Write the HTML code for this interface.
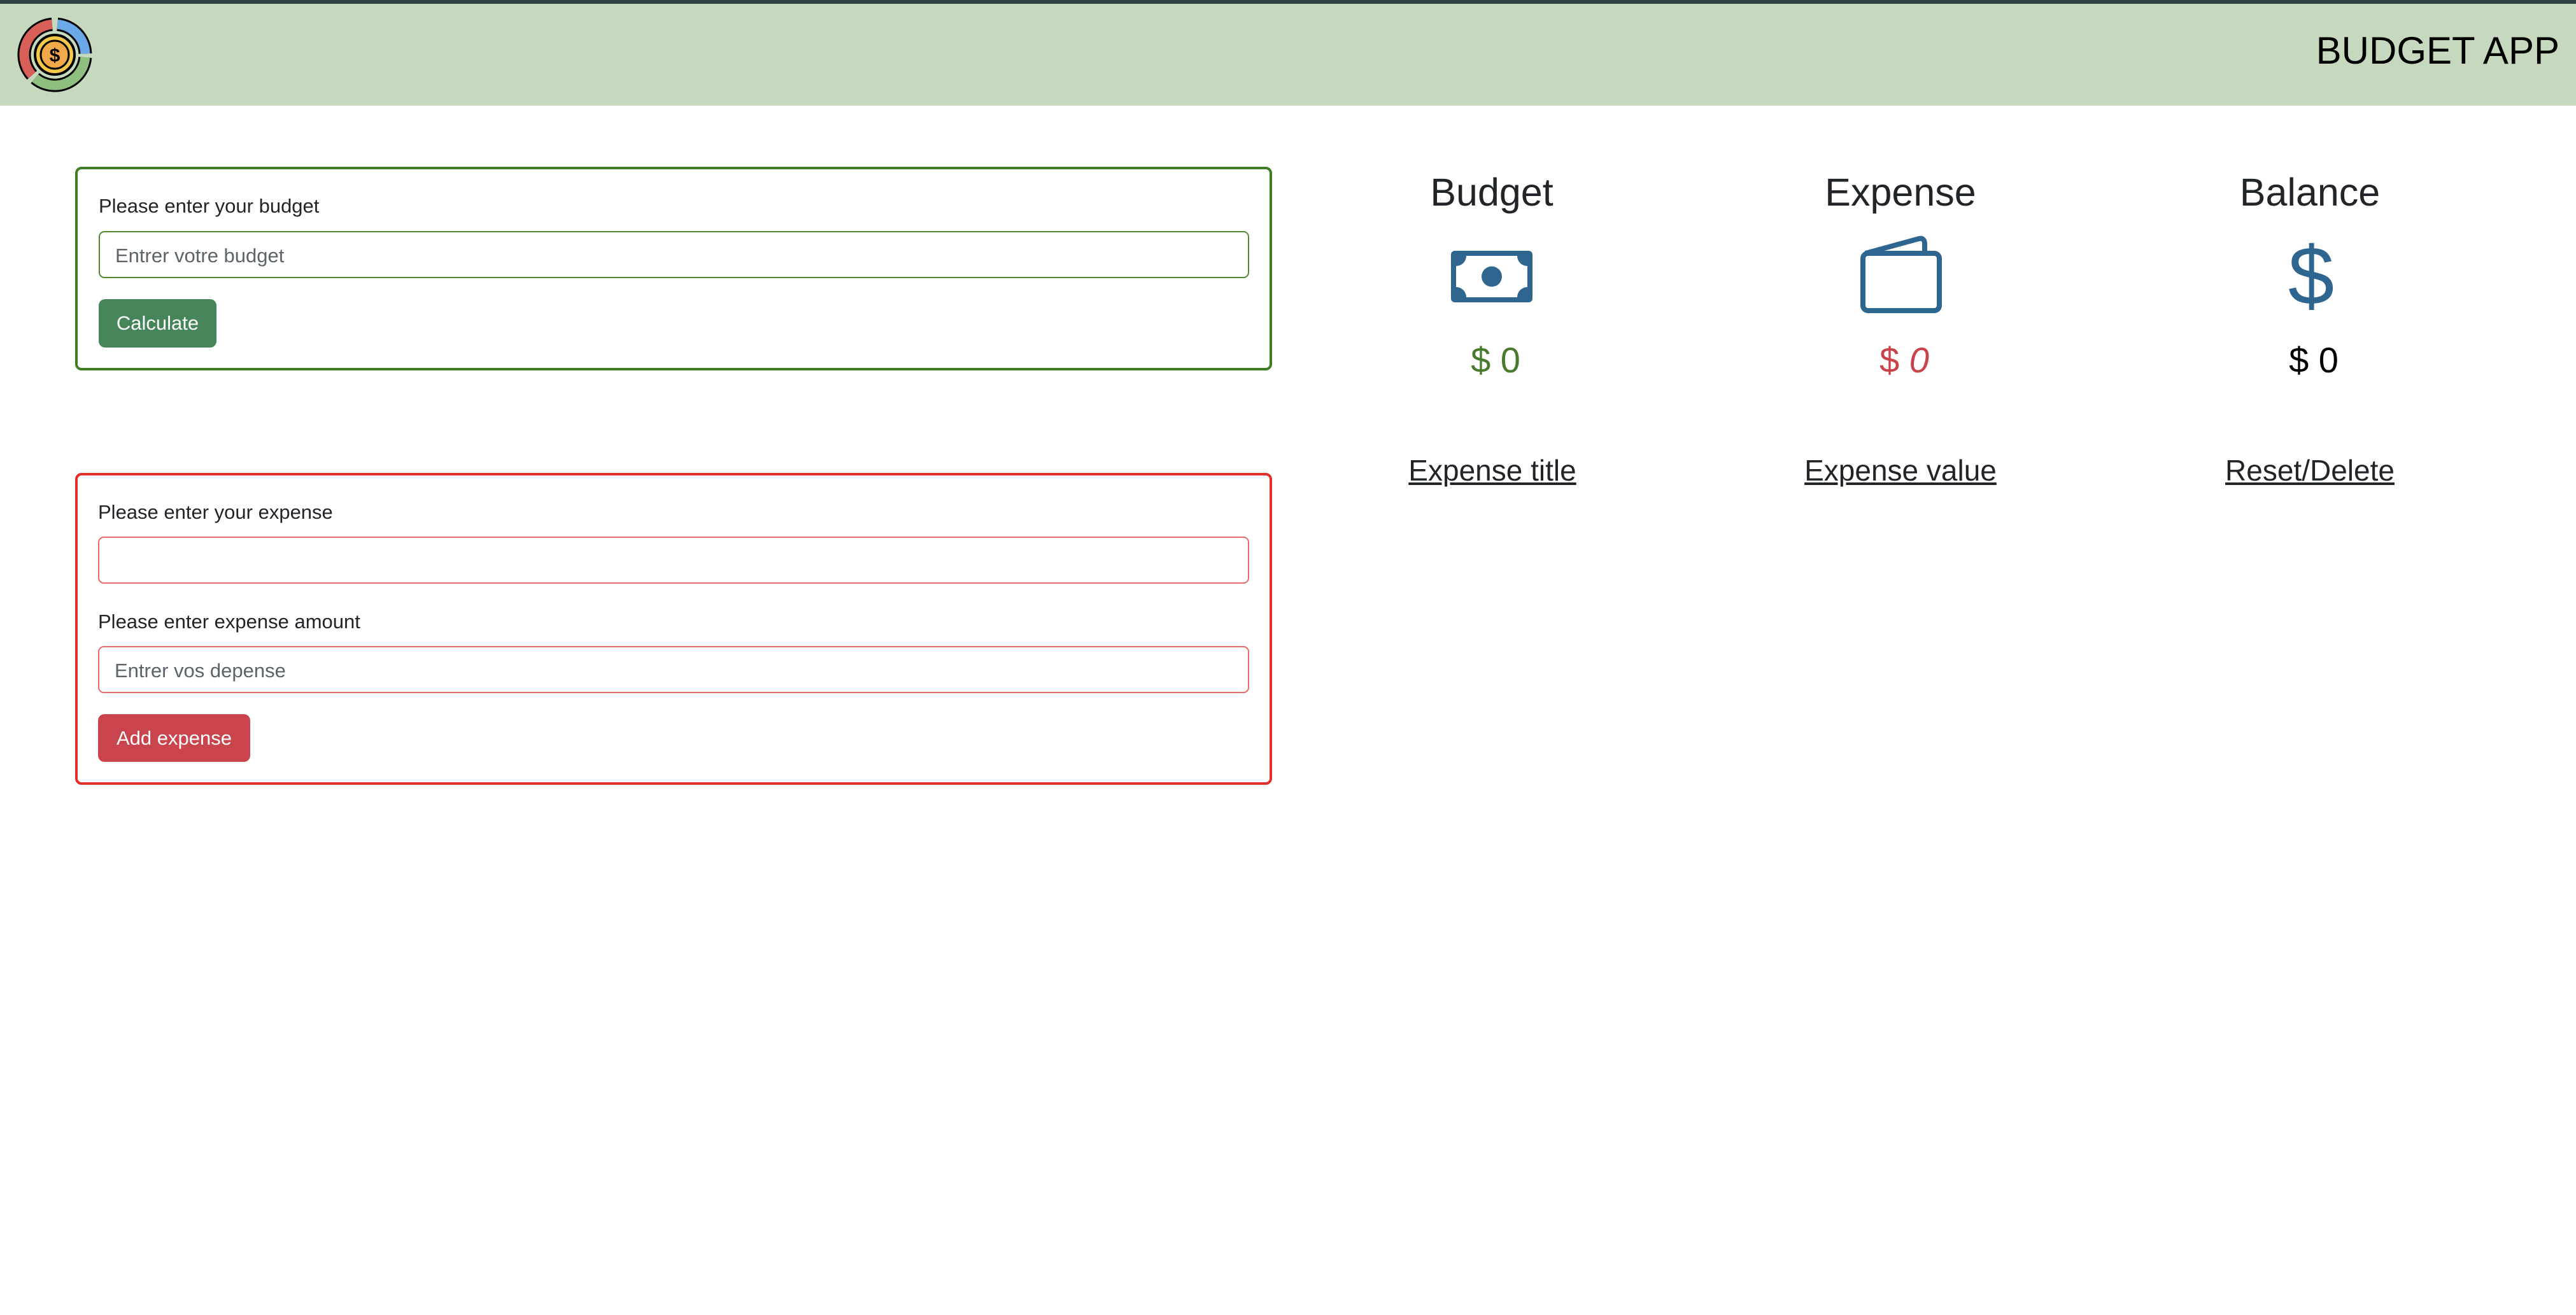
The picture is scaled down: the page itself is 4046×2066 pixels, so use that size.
<!DOCTYPE html>
<html><head><meta charset="utf-8"><style>
*{margin:0;padding:0;box-sizing:border-box}
html,body{width:4046px;height:2066px;background:#fff;overflow:hidden;font-family:"Liberation Sans",Arial,sans-serif;color:#212529}
.a{position:absolute;line-height:1;white-space:nowrap}
.c{transform:translateX(-50%)}
</style></head><body>
<div style="position:absolute;left:0;top:0;width:4046px;height:6px;background:#2f4440"></div>
<div style="position:absolute;left:0;top:6px;width:4046px;height:160px;background:#c6d9bf"></div>
<svg style="position:absolute;left:25px;top:25px" width="122" height="122" viewBox="25 25 122 122">
<g fill="none" stroke-linecap="butt">
<path d="M50.3 118.1 A48 48 0 0 1 81.8 38.2" stroke="#000" stroke-width="21"/>
<path d="M50.3 118.1 A48 48 0 0 1 81.8 38.2" stroke="#d75f58" stroke-width="15"/>
<path d="M90.2 38.2 A48 48 0 0 1 133.95 84.3" stroke="#000" stroke-width="21"/>
<path d="M90.2 38.2 A48 48 0 0 1 133.95 84.3" stroke="#6aa8e8" stroke-width="15"/>
<path d="M133.8 90.2 A48 48 0 0 1 55.1 122.8" stroke="#000" stroke-width="21"/>
<path d="M133.8 90.2 A48 48 0 0 1 55.1 122.8" stroke="#8fbf80" stroke-width="15"/>
</g>
<circle cx="86" cy="86" r="31" fill="#f5c84a" stroke="#000" stroke-width="4"/>
<circle cx="86" cy="86" r="22" fill="#f0a848" stroke="#000" stroke-width="3"/>
<text x="86" y="97" text-anchor="middle" font-family="Liberation Sans" font-size="30" font-weight="bold" fill="#000">$</text>
</svg>
<div class="a" style="right:26px;top:50px;font-size:60px;color:#000">BUDGET APP</div>

<div style="position:absolute;left:118px;top:262px;width:1880px;height:320px;border:4px solid #3e7d24;border-radius:10px"></div>
<div class="a" style="left:155px;top:308px;font-size:31px">Please enter your budget</div>
<div style="position:absolute;left:155px;top:363px;width:1807px;height:74px;border:2px solid #4e8a34;border-radius:9px"></div>
<div class="a" style="left:181px;top:386px;font-size:31px;color:#5c636a">Entrer votre budget</div>
<div style="position:absolute;left:155px;top:470px;width:185px;height:76px;background:#46855a;border-radius:10px;color:#fff;font-size:31px;line-height:76px;text-align:center">Calculate</div>

<div style="position:absolute;left:118px;top:743px;width:1880px;height:490px;border:4px solid #e0302a;border-radius:10px"></div>
<div class="a" style="left:154px;top:789px;font-size:31px">Please enter your expense</div>
<div style="position:absolute;left:154px;top:843px;width:1808px;height:74px;border:2px solid #e66a68;border-radius:9px"></div>
<div class="a" style="left:154px;top:961px;font-size:31px">Please enter expense amount</div>
<div style="position:absolute;left:154px;top:1015px;width:1808px;height:74px;border:2px solid #e66a68;border-radius:9px"></div>
<div class="a" style="left:180px;top:1038px;font-size:31px;color:#5c636a">Entrer vos depense</div>
<div style="position:absolute;left:154px;top:1122px;width:239px;height:75px;background:#c9444c;border-radius:10px;color:#fff;font-size:31px;line-height:75px;text-align:center">Add expense</div>

<div class="a c" style="left:2343px;top:272px;font-size:61px">Budget</div>
<div class="a c" style="left:2985px;top:272px;font-size:61px">Expense</div>
<div class="a c" style="left:3628px;top:272px;font-size:61px">Balance</div>

<svg style="position:absolute;left:2279px;top:394px" width="128" height="81" viewBox="0 0 128 81">
<path fill="#2f6690" fill-rule="evenodd" d="M6 0H122A6 6 0 0 1 128 6V75A6 6 0 0 1 122 81H6A6 6 0 0 1 0 75V6A6 6 0 0 1 6 0ZM24 8A16 16 0 0 1 8 24V57A16 16 0 0 1 24 73H104A16 16 0 0 1 120 57V24A16 16 0 0 1 104 8Z"/>
<circle cx="64" cy="40.5" r="16" fill="#2f6690"/>
</svg>
<svg style="position:absolute;left:2920px;top:370px" width="132" height="124" viewBox="0 0 132 124">
<g fill="none" stroke="#2f6690" stroke-width="8" stroke-linejoin="round">
<rect x="6" y="28" width="120" height="90" rx="8"/>
<path d="M10 28 L94 5 Q102 3 103 12 V28"/>
</g>
</svg>
<div class="a c" style="left:3630px;top:368px;font-size:130px;color:#2f6690">$</div>

<div class="a c" style="left:2349px;top:538px;font-size:56px;color:#4a7a2e">$ 0</div>
<div class="a c" style="left:2991px;top:538px;font-size:56px;color:#c9434a">$ <i>0</i></div>
<div class="a c" style="left:3634px;top:538px;font-size:56px;color:#000">$ 0</div>

<div class="a c" style="left:2344px;top:716px;font-size:46px;text-decoration:underline">Expense title</div>
<div class="a c" style="left:2985px;top:716px;font-size:46px;text-decoration:underline">Expense value</div>
<div class="a c" style="left:3628px;top:716px;font-size:46px;text-decoration:underline">Reset/Delete</div>
</body></html>
